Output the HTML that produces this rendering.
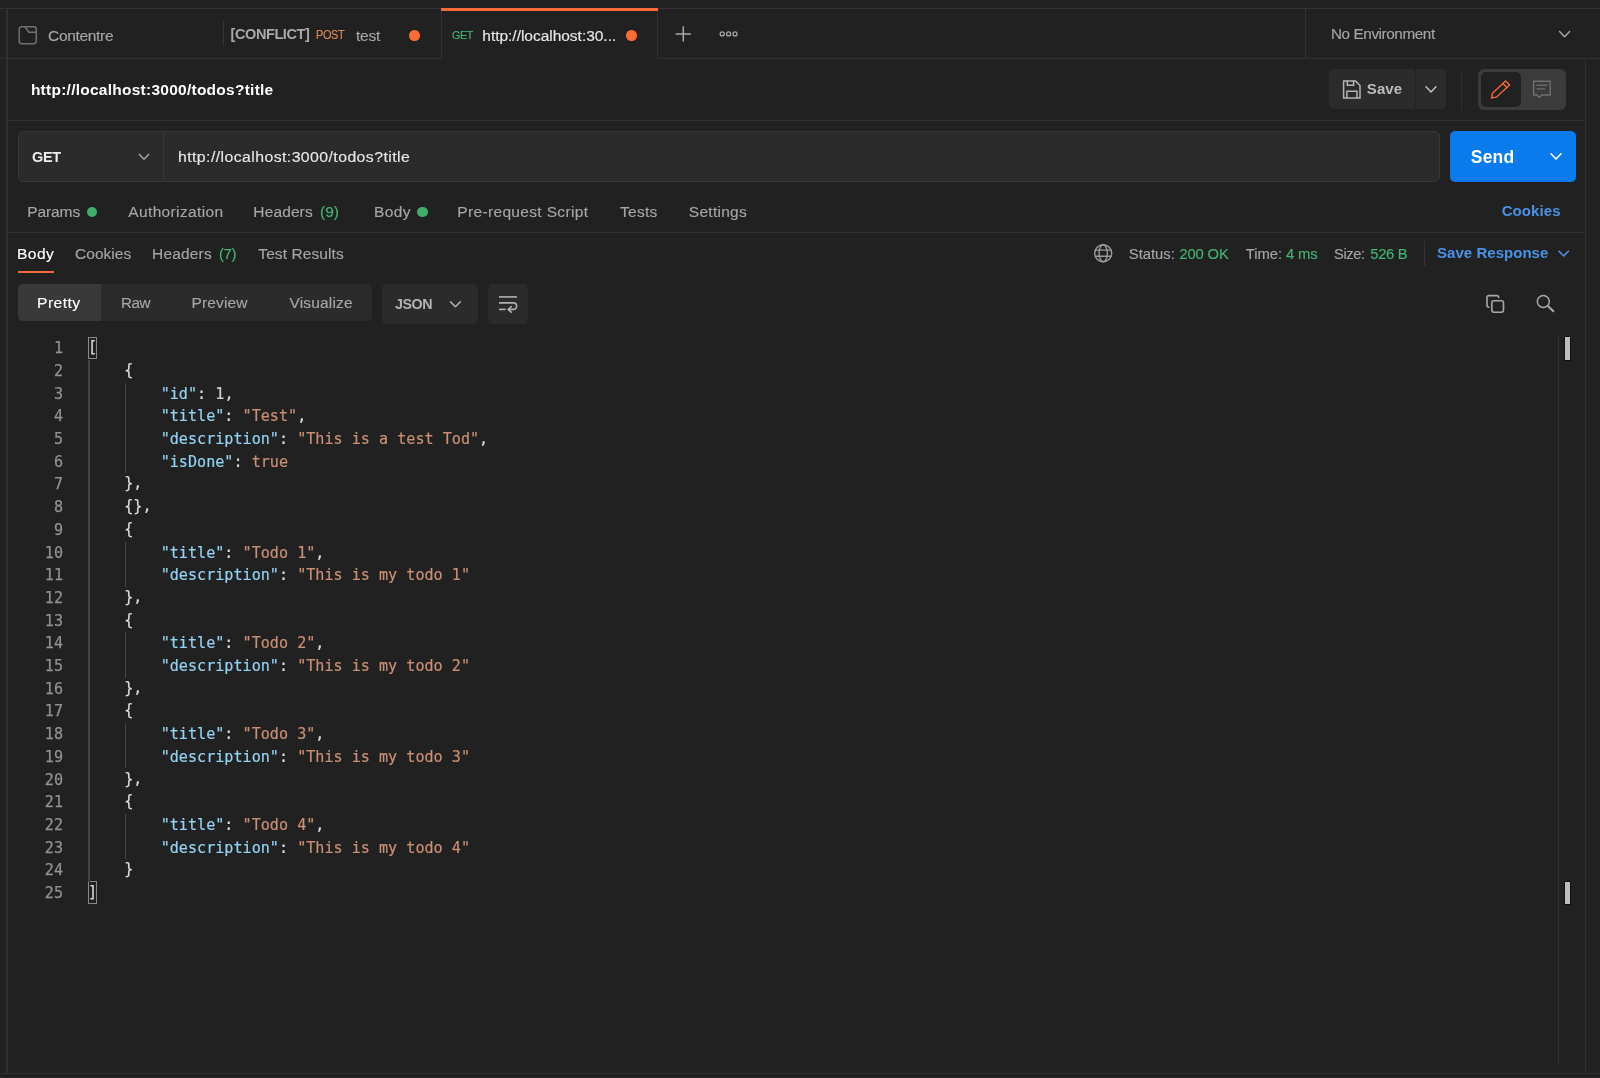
<!DOCTYPE html>
<html lang="en"><head><meta charset="utf-8"><title>Postman</title>
<style>
*{box-sizing:border-box;margin:0;padding:0}
html,body{width:1600px;height:1078px;overflow:hidden;background:#212121;}
#app{position:absolute;left:0;top:0;width:1600px;height:1078px;will-change:transform}
body{position:relative;font-family:"Liberation Sans", sans-serif;-webkit-font-smoothing:antialiased}
.abs,.t,.hl,.vl,.ln,.cl,.ig,svg{position:absolute}
.t{white-space:pre;line-height:20px;height:20px}
.hl{height:1px;background:#303030}
.vl{width:1px;background:#303030}
.ln{left:20px;width:43px;text-align:right;font-family:"DejaVu Sans Mono", "Liberation Mono", monospace;font-size:15.12px;line-height:22.7px;height:22.7px;color:#929292;white-space:pre;-webkit-text-stroke:0.25px}
.cl{-webkit-text-stroke:0.2px;left:87.9px;font-family:"DejaVu Sans Mono", "Liberation Mono", monospace;font-size:15.12px;line-height:22.7px;height:22.7px;white-space:pre;color:#d6d6d6}
.k{color:#94d2f3} .s{color:#cb8f75} .b{color:#cb8f75} .n{color:#d0d0d0} .p{color:#dcdcdc}
.ig{width:1px;background:#454545}
.box{border-radius:5px}
</style></head>
<body>
<div id="app">
<!-- structure -->
<div class="hl" style="left:0;top:7.6px;width:1600px;height:1.4px;background:#333"></div>
<div class="vl" style="left:6.3px;top:9px;height:1065px;width:1.3px"></div>
<div class="hl" style="left:0;top:58px;width:1600px"></div>
<div class="hl" style="left:7px;top:120px;width:1578px"></div>
<div class="hl" style="left:7px;top:232px;width:1578px"></div>
<div class="hl" style="left:0;top:1073px;width:1600px"></div>
<div class="vl" style="left:1585px;top:59px;height:1014px"></div>
<div class="vl" style="left:1305px;top:9px;height:49px"></div>
<div class="vl" style="left:1558px;top:337px;height:727px"></div>
<!-- tabs -->
<div class="vl" style="left:223px;top:21px;height:25px;background:#333"></div>
<div class="abs" style="left:441px;top:8px;width:217px;height:51px;background:#212121;border-left:1px solid #303030;border-right:1px solid #303030"></div>
<div class="abs" style="left:441px;top:8px;width:217px;height:3.4px;background:#f96b38"></div>
<div class="abs" style="left:409.4px;top:30.3px;width:10.4px;height:10.4px;border-radius:50%;background:#fa6b38"></div>
<div class="abs" style="left:626.3px;top:30.3px;width:10.4px;height:10.4px;border-radius:50%;background:#fa6b38"></div>
<!-- save -->
<div class="abs" style="left:1329px;top:69.3px;width:86px;height:40.2px;background:#2b2b2b;border-radius:5px 2px 2px 5px"></div>
<div class="abs" style="left:1416px;top:69.3px;width:30px;height:40.2px;background:#2b2b2b;border-radius:2px 5px 5px 2px"></div>
<div class="vl" style="left:1461px;top:70px;height:40px"></div>
<div class="abs" style="left:1477.7px;top:69px;width:88.3px;height:40.8px;background:#3b3b3b;border-radius:6px"></div>
<div class="abs" style="left:1480.5px;top:72px;width:40px;height:35px;background:#212121;border-radius:5px"></div>
<!-- url bar -->
<div class="abs" style="left:18px;top:131px;width:1422px;height:50.5px;background:#2b2b2b;border:1px solid #383838;border-radius:5px"></div>
<div class="vl" style="left:163px;top:132px;height:48.5px;background:#383838"></div>
<div class="abs" style="left:1450px;top:130.8px;width:125.8px;height:51.2px;background:#097bed;border-radius:5px"></div>
<!-- dots -->
<div class="abs" style="left:86.8px;top:206.7px;width:10.6px;height:10.6px;border-radius:50%;background:#3fae6c"></div>
<div class="abs" style="left:417px;top:206.7px;width:10.6px;height:10.6px;border-radius:50%;background:#3fae6c"></div>
<!-- resp tab underline -->
<div class="abs" style="left:17.5px;top:271px;width:36.5px;height:2.3px;background:#f26b3a"></div>
<div class="vl" style="left:1424px;top:241px;height:24.5px;background:#343434"></div>
<!-- view group -->
<div class="abs" style="left:18px;top:283.7px;width:353.8px;height:37.6px;background:#2b2b2b;border-radius:5px"></div>
<div class="abs" style="left:18px;top:283.7px;width:82.8px;height:37.6px;background:#393939;border-radius:5px 0 0 5px"></div>
<div class="abs" style="left:382px;top:283.5px;width:95.6px;height:40.2px;background:#2b2b2b;border-radius:5px"></div>
<div class="abs" style="left:488px;top:283.5px;width:39.8px;height:40.2px;background:#2b2b2b;border-radius:5px"></div>
<!-- bracket boxes -->
<div class="abs" style="left:88.2px;top:336.6px;width:9px;height:22.8px;border:1px solid #8a8a8a"></div>
<div class="abs" style="left:88.2px;top:881.4px;width:9px;height:22.8px;border:1px solid #8a8a8a"></div>
<!-- scroll markers -->
<div class="abs" style="left:1564.9px;top:337px;width:5.5px;height:22.5px;background:#bdbdbd;box-shadow:0 0 0 1px #111"></div>
<div class="abs" style="left:1564.9px;top:881.5px;width:5.5px;height:22.5px;background:#bdbdbd;box-shadow:0 0 0 1px #111"></div>

<!-- text -->
<span class="t" style="left:48.08px;top:26.08px;font-size:15.5px;font-weight:400;color:#a6a6a6;-webkit-text-stroke:0.15px #a6a6a6;letter-spacing:-0.325px;">Contentre</span>
<span class="t" style="left:230.60px;top:23.78px;font-size:14.5px;font-weight:700;color:#a9a9a9;letter-spacing:-0.414px;">[CONFLICT]</span>
<span class="t" style="left:315.67px;top:24.57px;font-size:12.2px;font-weight:400;color:#d9875a;-webkit-text-stroke:0.15px #d9875a;letter-spacing:-0.420px;transform:scaleX(0.9011);transform-origin:0 0;">POST</span>
<span class="t" style="left:356.07px;top:26.08px;font-size:15.5px;font-weight:400;color:#a6a6a6;-webkit-text-stroke:0.15px #a6a6a6;letter-spacing:-0.276px;">test</span>
<span class="t" style="left:451.82px;top:24.91px;font-size:11.8px;font-weight:400;color:#44b472;-webkit-text-stroke:0.15px #44b472;letter-spacing:-0.420px;transform:scaleX(0.9099);transform-origin:0 0;">GET</span>
<span class="t" style="left:482.32px;top:26.08px;font-size:15.5px;font-weight:400;color:#e8e8e8;-webkit-text-stroke:0.15px #e8e8e8;letter-spacing:-0.024px;">http://localhost:30...</span>
<span class="t" style="left:1330.69px;top:24.33px;font-size:15.5px;font-weight:400;color:#a6a6a6;-webkit-text-stroke:0.15px #a6a6a6;letter-spacing:-0.420px;transform:scaleX(0.9856);transform-origin:0 0;">No Environment</span>
<span class="t" style="left:30.90px;top:79.93px;font-size:15.5px;font-weight:700;color:#ffffff;letter-spacing:0.253px;">http://localhost:3000/todos?title</span>
<span class="t" style="left:1366.80px;top:78.70px;font-size:15px;font-weight:700;color:#bcbcbc;letter-spacing:0.104px;">Save</span>
<span class="t" style="left:31.75px;top:147.23px;font-size:15.5px;font-weight:700;color:#ececec;letter-spacing:-0.420px;transform:scaleX(0.9349);transform-origin:0 0;">GET</span>
<span class="t" style="left:178.06px;top:146.83px;font-size:15.5px;font-weight:400;color:#e8e8e8;-webkit-text-stroke:0.15px #e8e8e8;letter-spacing:0.420px;transform:scaleX(1.0201);transform-origin:0 0;">http://localhost:3000/todos?title</span>
<span class="t" style="left:1470.80px;top:147.24px;font-size:17.5px;font-weight:700;color:#ffffff;letter-spacing:0.168px;">Send</span>
<span class="t" style="left:27.32px;top:202.08px;font-size:15.5px;font-weight:400;color:#a6a6a6;-webkit-text-stroke:0.15px #a6a6a6;letter-spacing:-0.110px;">Params</span>
<span class="t" style="left:128.32px;top:202.08px;font-size:15.5px;font-weight:400;color:#a6a6a6;-webkit-text-stroke:0.15px #a6a6a6;letter-spacing:0.354px;">Authorization</span>
<span class="t" style="left:253.32px;top:202.08px;font-size:15.5px;font-weight:400;color:#a6a6a6;-webkit-text-stroke:0.15px #a6a6a6;letter-spacing:0.127px;">Headers</span>
<span class="t" style="left:320.07px;top:202.08px;font-size:15.5px;font-weight:400;color:#44b472;-webkit-text-stroke:0.15px #44b472;letter-spacing:-0.091px;">(9)</span>
<span class="t" style="left:374.07px;top:202.08px;font-size:15.5px;font-weight:400;color:#a6a6a6;-webkit-text-stroke:0.15px #a6a6a6;letter-spacing:0.340px;">Body</span>
<span class="t" style="left:457.32px;top:202.08px;font-size:15.5px;font-weight:400;color:#a6a6a6;-webkit-text-stroke:0.15px #a6a6a6;letter-spacing:0.338px;">Pre-request Script</span>
<span class="t" style="left:620.08px;top:202.08px;font-size:15.5px;font-weight:400;color:#a6a6a6;-webkit-text-stroke:0.15px #a6a6a6;letter-spacing:0.231px;">Tests</span>
<span class="t" style="left:688.83px;top:202.08px;font-size:15.5px;font-weight:400;color:#a6a6a6;-webkit-text-stroke:0.15px #a6a6a6;letter-spacing:0.263px;">Settings</span>
<span class="t" style="left:1501.70px;top:201.30px;font-size:15px;font-weight:700;color:#4a92e6;letter-spacing:0.082px;">Cookies</span>
<span class="t" style="left:16.57px;top:244.08px;font-size:15.5px;font-weight:400;color:#ffffff;-webkit-text-stroke:0.15px #ffffff;letter-spacing:0.420px;transform:scaleX(1.0072);transform-origin:0 0;">Body</span>
<span class="t" style="left:75.08px;top:244.08px;font-size:15.5px;font-weight:400;color:#a6a6a6;-webkit-text-stroke:0.15px #a6a6a6;letter-spacing:0.017px;">Cookies</span>
<span class="t" style="left:152.07px;top:244.08px;font-size:15.5px;font-weight:400;color:#a6a6a6;-webkit-text-stroke:0.15px #a6a6a6;letter-spacing:0.169px;">Headers</span>
<span class="t" style="left:218.82px;top:244.08px;font-size:15.5px;font-weight:400;color:#44b472;-webkit-text-stroke:0.15px #44b472;letter-spacing:-0.420px;transform:scaleX(0.9673);transform-origin:0 0;">(7)</span>
<span class="t" style="left:258.32px;top:244.08px;font-size:15.5px;font-weight:400;color:#a6a6a6;-webkit-text-stroke:0.15px #a6a6a6;letter-spacing:0.085px;">Test Results</span>
<span class="t" style="left:1128.78px;top:243.97px;font-size:14.8px;font-weight:400;color:#a6a6a6;-webkit-text-stroke:0.15px #a6a6a6;letter-spacing:0.000px;">Status:</span>
<span class="t" style="left:1179.48px;top:243.97px;font-size:14.8px;font-weight:400;color:#44b472;-webkit-text-stroke:0.15px #44b472;letter-spacing:-0.172px;">200 OK</span>
<span class="t" style="left:1245.78px;top:243.97px;font-size:14.8px;font-weight:400;color:#a6a6a6;-webkit-text-stroke:0.15px #a6a6a6;letter-spacing:-0.045px;">Time:</span>
<span class="t" style="left:1286.08px;top:243.97px;font-size:14.8px;font-weight:400;color:#44b472;-webkit-text-stroke:0.15px #44b472;letter-spacing:-0.205px;">4 ms</span>
<span class="t" style="left:1333.72px;top:243.97px;font-size:14.8px;font-weight:400;color:#a6a6a6;-webkit-text-stroke:0.15px #a6a6a6;letter-spacing:-0.420px;transform:scaleX(0.9949);transform-origin:0 0;">Size:</span>
<span class="t" style="left:1370.28px;top:243.97px;font-size:14.8px;font-weight:400;color:#44b472;-webkit-text-stroke:0.15px #44b472;letter-spacing:-0.337px;">526 B</span>
<span class="t" style="left:1437.00px;top:242.50px;font-size:15px;font-weight:700;color:#4a92e6;letter-spacing:0.038px;">Save Response</span>
<span class="t" style="left:37.06px;top:292.83px;font-size:15.5px;font-weight:400;color:#ffffff;-webkit-text-stroke:0.15px #ffffff;letter-spacing:0.420px;transform:scaleX(1.0123);transform-origin:0 0;">Pretty</span>
<span class="t" style="left:120.84px;top:292.83px;font-size:15.5px;font-weight:400;color:#a6a6a6;-webkit-text-stroke:0.15px #a6a6a6;letter-spacing:-0.420px;transform:scaleX(0.9793);transform-origin:0 0;">Raw</span>
<span class="t" style="left:191.57px;top:292.83px;font-size:15.5px;font-weight:400;color:#a6a6a6;-webkit-text-stroke:0.15px #a6a6a6;letter-spacing:0.111px;">Preview</span>
<span class="t" style="left:289.57px;top:292.83px;font-size:15.5px;font-weight:400;color:#a6a6a6;-webkit-text-stroke:0.15px #a6a6a6;letter-spacing:0.153px;">Visualize</span>
<span class="t" style="left:395.40px;top:293.70px;font-size:15px;font-weight:700;color:#b4b4b4;letter-spacing:-0.420px;transform:scaleX(0.9496);transform-origin:0 0;">JSON</span>
<!-- icons -->
<svg width="1600" height="1078" viewBox="0 0 1600 1078" style="left:0;top:0;pointer-events:none" fill="none" stroke-linecap="round" stroke-linejoin="round">
<!-- collection/folder tab icon -->
<g stroke="#6e7272" stroke-width="1.5">
<rect x="19.2" y="26.7" width="17.1" height="17" rx="2.6"/>
<path d="M25 26.9 L28.8 32.3 H36.2"/>
</g>
<!-- plus -->
<g stroke="#a8a8a8" stroke-width="1.5" stroke-linecap="butt">
<path d="M675.6 33.9 H690.9 M683.3 26.3 V41.6"/>
</g>
<!-- more ooo -->
<g stroke="#a8a8a8" stroke-width="1.3">
<circle cx="722.2" cy="33.9" r="2"/><circle cx="728.6" cy="33.9" r="2"/><circle cx="735" cy="33.9" r="2"/>
</g>
<!-- env chevron -->
<path d="M1559.6 31.6 L1564.6 36.8 L1569.6 31.6" stroke="#a6a6a6" stroke-width="1.5"/>
<!-- save icon -->
<g stroke="#b4b4b4" stroke-width="1.5" stroke-linejoin="miter">
<path d="M1343.6 81.1 H1355.6 L1360 85.5 V98 H1343.6 Z"/>
<path d="M1347.3 81.1 V85.3 H1353.6 V81.1"/>
<path d="M1346.9 98 V91.2 H1357 V98"/>
</g>
<!-- save chevron -->
<path d="M1426 86.8 L1431 92 L1436 86.8" stroke="#c0c0c0" stroke-width="1.5"/>
<!-- pencil -->
<g stroke="#f26b3a" stroke-width="1.4" stroke-linejoin="miter">
<path d="M1491.6 97.9 L1492.4 93.3 L1505.6 80.9 L1509.6 84.9 L1496.4 97.2 Z"/>
<path d="M1502.9 83.6 L1506.9 87.6"/>
</g>
<!-- comment -->
<g stroke="#6e7272" stroke-width="1.4" stroke-linejoin="miter">
<path d="M1533.6 81.3 H1550.2 V95 H1541.6 L1539.3 97.4 L1537 95 H1533.6 Z"/>
<path d="M1537 85.1 H1547 M1537 88.9 H1544.6"/>
</g>
<!-- method chevron -->
<path d="M139.4 154.4 L144 159.2 L148.6 154.4" stroke="#a6a6a6" stroke-width="1.5"/>
<!-- send chevron -->
<path d="M1551 153.8 L1556 159 L1561 153.8" stroke="#ffffff" stroke-width="1.6"/>
<!-- globe -->
<g stroke="#9c9c9c" stroke-width="1.4">
<circle cx="1103.2" cy="253.25" r="8.5"/>
<ellipse cx="1103.2" cy="253.25" rx="4.1" ry="8.5"/>
<path d="M1095.6 250.1 H1110.8 M1095.6 256.3 H1110.8"/>
</g>
<!-- save response chevron -->
<path d="M1559 251.2 L1563.7 256 L1568.4 251.2" stroke="#4a92e6" stroke-width="1.6"/>
<!-- JSON chevron -->
<path d="M450.6 301.9 L455.4 306.7 L460.2 301.9" stroke="#b0b0b0" stroke-width="1.5"/>
<!-- wrap icon -->
<g stroke="#b0b0b0" stroke-width="1.6" stroke-linecap="butt">
<path d="M499 296.9 H517"/>
<path d="M499 302.9 H513.4 A3.25 3.25 0 0 1 513.4 309.4 H508.6"/>
<path d="M511.7 306.2 L508.1 309.4 L511.7 312.6"/>
<path d="M499 309.4 H505.7"/>
</g>
<!-- copy -->
<g stroke="#a8a8a8" stroke-width="1.6">
<rect x="1491.8" y="300.7" width="11.7" height="11.6" rx="2.2"/>
<path d="M1489 307.2 H1488.9 A1.9 1.9 0 0 1 1487 305.3 V297.5 A1.9 1.9 0 0 1 1488.9 295.6 H1496.8 A1.9 1.9 0 0 1 1498.7 297.5 V297.6"/>
</g>
<!-- search -->
<g stroke="#a8a8a8">
<circle cx="1543.3" cy="301.4" r="6" stroke-width="1.5"/>
<path d="M1547.9 306 L1553.9 311.8" stroke-width="2.1" stroke-linecap="butt"/>
</g>
</svg>

<!-- code -->
<div class="ig" style="left:88.3px;top:359.90px;height:522.10px;width:1.3px"></div>
<div class="ig" style="left:125px;top:382.60px;height:90.80px;width:1px"></div>
<div class="ig" style="left:125px;top:541.50px;height:45.40px;width:1px"></div>
<div class="ig" style="left:125px;top:632.30px;height:45.40px;width:1px"></div>
<div class="ig" style="left:125px;top:723.10px;height:45.40px;width:1px"></div>
<div class="ig" style="left:125px;top:813.90px;height:45.40px;width:1px"></div>
<div class="ln" style="top:337.20px">1</div>
<div class="cl" style="top:336.20px"><span class="p">[</span></div>
<div class="ln" style="top:359.90px">2</div>
<div class="cl" style="top:358.90px"><span class="p">    {</span></div>
<div class="ln" style="top:382.60px">3</div>
<div class="cl" style="top:382.60px"><span class="p">        </span><span class="k">&quot;id&quot;</span><span class="p">: </span><span class="n">1</span><span class="p">,</span></div>
<div class="ln" style="top:405.30px">4</div>
<div class="cl" style="top:405.30px"><span class="p">        </span><span class="k">&quot;title&quot;</span><span class="p">: </span><span class="s">&quot;Test&quot;</span><span class="p">,</span></div>
<div class="ln" style="top:428.00px">5</div>
<div class="cl" style="top:428.00px"><span class="p">        </span><span class="k">&quot;description&quot;</span><span class="p">: </span><span class="s">&quot;This is a test Tod&quot;</span><span class="p">,</span></div>
<div class="ln" style="top:450.70px">6</div>
<div class="cl" style="top:450.70px"><span class="p">        </span><span class="k">&quot;isDone&quot;</span><span class="p">: </span><span class="b">true</span></div>
<div class="ln" style="top:473.40px">7</div>
<div class="cl" style="top:472.40px"><span class="p">    },</span></div>
<div class="ln" style="top:496.10px">8</div>
<div class="cl" style="top:495.10px"><span class="p">    {},</span></div>
<div class="ln" style="top:518.80px">9</div>
<div class="cl" style="top:517.80px"><span class="p">    {</span></div>
<div class="ln" style="top:541.50px">10</div>
<div class="cl" style="top:541.50px"><span class="p">        </span><span class="k">&quot;title&quot;</span><span class="p">: </span><span class="s">&quot;Todo 1&quot;</span><span class="p">,</span></div>
<div class="ln" style="top:564.20px">11</div>
<div class="cl" style="top:564.20px"><span class="p">        </span><span class="k">&quot;description&quot;</span><span class="p">: </span><span class="s">&quot;This is my todo 1&quot;</span></div>
<div class="ln" style="top:586.90px">12</div>
<div class="cl" style="top:585.90px"><span class="p">    },</span></div>
<div class="ln" style="top:609.60px">13</div>
<div class="cl" style="top:608.60px"><span class="p">    {</span></div>
<div class="ln" style="top:632.30px">14</div>
<div class="cl" style="top:632.30px"><span class="p">        </span><span class="k">&quot;title&quot;</span><span class="p">: </span><span class="s">&quot;Todo 2&quot;</span><span class="p">,</span></div>
<div class="ln" style="top:655.00px">15</div>
<div class="cl" style="top:655.00px"><span class="p">        </span><span class="k">&quot;description&quot;</span><span class="p">: </span><span class="s">&quot;This is my todo 2&quot;</span></div>
<div class="ln" style="top:677.70px">16</div>
<div class="cl" style="top:676.70px"><span class="p">    },</span></div>
<div class="ln" style="top:700.40px">17</div>
<div class="cl" style="top:699.40px"><span class="p">    {</span></div>
<div class="ln" style="top:723.10px">18</div>
<div class="cl" style="top:723.10px"><span class="p">        </span><span class="k">&quot;title&quot;</span><span class="p">: </span><span class="s">&quot;Todo 3&quot;</span><span class="p">,</span></div>
<div class="ln" style="top:745.80px">19</div>
<div class="cl" style="top:745.80px"><span class="p">        </span><span class="k">&quot;description&quot;</span><span class="p">: </span><span class="s">&quot;This is my todo 3&quot;</span></div>
<div class="ln" style="top:768.50px">20</div>
<div class="cl" style="top:767.50px"><span class="p">    },</span></div>
<div class="ln" style="top:791.20px">21</div>
<div class="cl" style="top:790.20px"><span class="p">    {</span></div>
<div class="ln" style="top:813.90px">22</div>
<div class="cl" style="top:813.90px"><span class="p">        </span><span class="k">&quot;title&quot;</span><span class="p">: </span><span class="s">&quot;Todo 4&quot;</span><span class="p">,</span></div>
<div class="ln" style="top:836.60px">23</div>
<div class="cl" style="top:836.60px"><span class="p">        </span><span class="k">&quot;description&quot;</span><span class="p">: </span><span class="s">&quot;This is my todo 4&quot;</span></div>
<div class="ln" style="top:859.30px">24</div>
<div class="cl" style="top:858.30px"><span class="p">    }</span></div>
<div class="ln" style="top:882.00px">25</div>
<div class="cl" style="top:881.00px"><span class="p">]</span></div>
</div>
</body></html>
